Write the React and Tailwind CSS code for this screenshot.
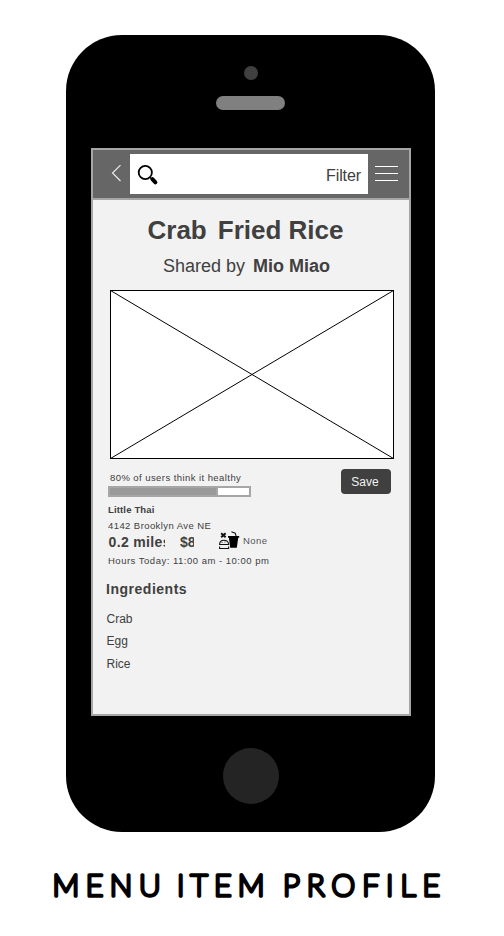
function SearchIcon() {
  return (
    <svg width="22" height="22" viewBox="0 0 22 22" fill="none" stroke="#000">
      <circle cx="8.3" cy="8.5" r="6.6" strokeWidth="1.8" />
      <path d="M12.8 13.2l1.6 1.6" strokeWidth="1.1" />
      <path d="M15.4 15.2l3 3.2" strokeWidth="4" strokeLinecap="round" />
    </svg>
  );
}

function FoodIcon() {
  return (
    <svg width="21" height="19" viewBox="0 0 21 19" fill="none" stroke="#111">
      <path d="M2.2 2.3l4.4 4M6.6 2.3L2.2 6.3" strokeWidth="2" />
      <path d="M.6 13.5C.6 7.8 9.3 7.8 9.6 13.5zM.6 15.5v2h9v-2" strokeWidth="1.1" />
      <path d="M2.6 11.4h1M5.4 11h1" strokeWidth=".8" />
      <path d="M9 5h11.2v1.8h-1L17.8 16.8h-6.6L9.9 6.8H9z" fill="#000" stroke="none" />
      <path d="M12.4.8l3.8 1.4.9 3" strokeWidth="1.1" />
    </svg>
  );
}

function Header() {
  return (
    <div className="flex h-[50px] items-start border-b-2 border-[#a6a6a6] bg-[#666] pt-1">
      <svg className="ml-[18px] mt-[10px]" width="12" height="18" viewBox="0 0 12 18" fill="none" stroke="#eee">
        <path d="M9.5 1.2L1.5 9l8 8" strokeWidth="1.1" />
      </svg>
      <div className="ml-[7px] flex h-10 w-[238px] items-start justify-between bg-white pl-[7px] pr-[7px] pt-[10px]">
        <SearchIcon />
        <span className="mt-[1px] text-[16px] leading-[22px] tracking-[-0.1px]">Filter</span>
      </div>
      <div className="ml-[7px] mt-3 flex w-[23px] flex-col gap-[6px]">
        <i className="h-px bg-white" />
        <i className="h-px bg-white" />
        <i className="h-px bg-white" />
      </div>
    </div>
  );
}

const ingredients = ["Crab", "Egg", "Rice"];

export default function App() {
  return (
    <div className="flex h-[936px] w-[504px] flex-col overflow-hidden bg-white pt-[35px] font-['Liberation_Sans',Arial,sans-serif] text-[#404040]">
      <div className="ml-[66px] flex h-[796.5px] w-[369px] shrink-0 flex-col rounded-[56px] bg-black">
        <div className="ml-[178px] mt-[31px] size-[14px] rounded-full bg-[#404040]" />
        <div className="ml-[150px] mt-4 h-[14px] w-[69px] rounded-full bg-[#808080]" />
        <div className="ml-[25px] mt-[38px] h-[568px] w-[320px] border-2 border-[#a6a6a6] bg-[#f2f2f2]">
          <Header />
          <h1 className="ml-[54.5px] mt-[15px] flex gap-[11px] whitespace-nowrap text-[26px] font-bold leading-[30px]">
            <span>Crab</span>
            <span>Fried Rice</span>
          </h1>
          <div className="ml-[70px] mt-[11px] flex gap-[8px] whitespace-nowrap text-[18px] leading-5">
            <span>Shared by</span>
            <b>Mio Miao</b>
          </div>
          <svg className="ml-[17px] mt-[14px] block bg-white" width="284" height="169" fill="none" stroke="#000">
            <rect x=".5" y=".5" width="283" height="168" />
            <path d="M.5.5l283 168M283.5.5L.5 168.5" />
          </svg>
          <div className="ml-[15px] flex items-start whitespace-nowrap text-[9.5px] leading-3">
            <div className="w-[233px]">
              <p className="ml-[2px] mt-[13px] tracking-[0.43px]">80% of users think it healthy</p>
              <div className="mt-[2px] flex h-[11px] w-[143px] border-2 border-[#a6a6a6] bg-white">
                <div className="w-[108px] border-r-2 border-[#a6a6a6] bg-[#999]" />
              </div>
              <p className="mt-[7px] font-bold tracking-[0.15px]">Little Thai</p>
              <p className="mt-1 tracking-[0.42px]">4142 Brooklyn Ave NE</p>
              <div className="mt-px flex h-[18px] items-start leading-[18px]">
                <b className="w-[57px] overflow-hidden pl-[0.5px] text-[14px] tracking-[0.35px]">0.2 miles</b>
                <b className="ml-[15px] w-[14px] overflow-hidden text-[14px]">$8</b>
                <span className="-mt-[2px] ml-[24.5px]"><FoodIcon /></span>
                <span className="-mt-[1px] ml-[3.5px] text-[#555] tracking-[0.4px]">None</span>
              </div>
              <p className="mt-1 tracking-[0.5px]">Hours Today: 11:00 am - 10:00 pm</p>
            </div>
            <button className="mt-[10px] h-[25px] w-[50px] rounded-[4px] bg-[#404040] pr-[2px] text-[12px] text-[#f2f2f2]">Save</button>
          </div>
          <h2 className="ml-[13px] mt-[13px] text-[14px] font-bold leading-[18px] tracking-[0.52px]">Ingredients</h2>
          <ul className="ml-[13.5px] mt-[10px] text-[12px] leading-[22.4px]">
            {ingredients.map((name) => (
              <li key={name}>{name}</li>
            ))}
          </ul>
        </div>
        <div className="ml-[156.5px] mt-[32px] size-[56px] rounded-full bg-[#242424]" />
      </div>
      <svg
        className="ml-[40px] mt-[28px] shrink-0 font-['Lato',sans-serif] text-[30px] font-thin"
        width="424"
        height="54"
        fill="#000"
        stroke="#000"
        strokeWidth="3.7"
        strokeLinejoin="round"
      >
        <text x="12.5" y="36" textLength="108">MENU</text>
        <text x="137" y="36" textLength="87.5">ITEM</text>
        <text x="243" y="36" textLength="157">PROFILE</text>
      </svg>
    </div>
  );
}
